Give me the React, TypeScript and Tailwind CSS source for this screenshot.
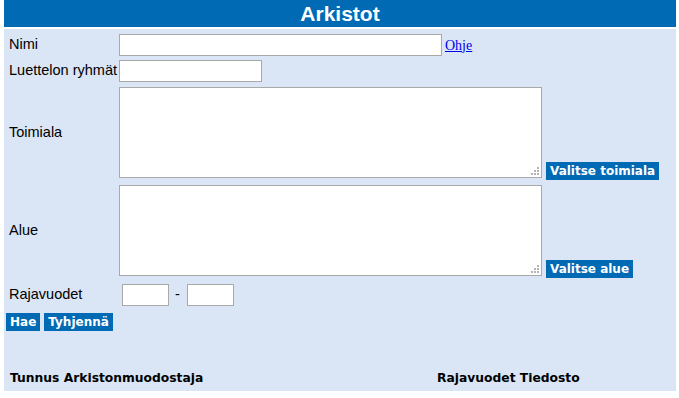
import React from 'react';

const btn = "bg-[#006ab4] text-white font-bold text-[12px] leading-[18px] h-[18px] px-[4px] font-['DejaVu_Sans',sans-serif] whitespace-nowrap";
const field = "bg-white border border-[#a9a9a9] outline-none";

// textarea with the small dotted resize grip in the corner
function Area() {
  return (
    <div className="relative">
      <textarea className={`${field} w-[423px] h-[91px] block resize-none`} />
      <svg className="absolute right-[3px] bottom-[3px]" width="8" height="8" viewBox="0 0 8 8">
        <g fill="#b4b4b4">
          <rect x="6" y="0" width="2" height="2" />
          <rect x="3" y="3" width="2" height="2" />
          <rect x="6" y="3" width="2" height="2" />
          <rect x="0" y="6" width="2" height="2" />
          <rect x="3" y="6" width="2" height="2" />
          <rect x="6" y="6" width="2" height="2" />
        </g>
      </svg>
    </div>
  );
}

export default function App() {
  return (
    <div className="w-[679px] h-[398px] bg-white font-['Liberation_Sans',Arial,sans-serif] text-black overflow-hidden">
      <div className="ml-[4px] w-[672px]">
        {/* Title bar */}
        <div className="h-[27px] bg-[#006ab4] flex items-center justify-center">
          <span className="text-white font-bold text-[21px] leading-none">Arkistot</span>
        </div>

        {/* Search form */}
        <div className="mt-[2px] h-[362px] bg-[#dae5f5] text-[14.5px] pt-[5px]">
          <div className="flex items-center h-[22px]">
            <label className="w-[115px] pl-[5px]">Nimi</label>
            <input type="text" className={`${field} w-[323px] h-[22px]`} />
            <a href="#" className="ml-[3px] text-[#0000ee] underline font-['Liberation_Serif',serif] text-[14px]">Ohje</a>
          </div>

          <div className="flex items-center h-[22px] mt-[4px]">
            <label className="w-[115px] pl-[5px] whitespace-nowrap">Luettelon ryhmät</label>
            <input type="text" className={`${field} w-[143px] h-[22px]`} />
          </div>

          <div className="flex mt-[5px]">
            <label className="w-[115px] pl-[5px] self-center">Toimiala</label>
            <Area />
            <span className={`${btn} ml-[4px] self-end mb-[-2px]`}>Valitse toimiala</span>
          </div>

          <div className="flex mt-[7px]">
            <label className="w-[115px] pl-[5px] self-center">Alue</label>
            <Area />
            <span className={`${btn} ml-[4px] self-end mb-[-2px]`}>Valitse alue</span>
          </div>

          <div className="flex items-center h-[22px] mt-[8px]">
            <label className="w-[118px] pl-[5px]">Rajavuodet</label>
            <input type="text" className={`${field} w-[47px] h-[22px]`} />
            <span className="ml-[6px] mr-[7px]">-</span>
            <input type="text" className={`${field} w-[47px] h-[22px]`} />
          </div>

          <div className="flex gap-[4px] mt-[7px] ml-[2px]">
            <span className={btn}>Hae</span>
            <span className={btn}>Tyhjennä</span>
          </div>

          <div className="flex mt-[38px] font-bold text-[12.3px] font-['DejaVu_Sans',sans-serif]">
            <div className="w-[433px] pl-[6px]">Tunnus Arkistonmuodostaja</div>
            <div>Rajavuodet Tiedosto</div>
          </div>
        </div>
      </div>
    </div>
  );
}
